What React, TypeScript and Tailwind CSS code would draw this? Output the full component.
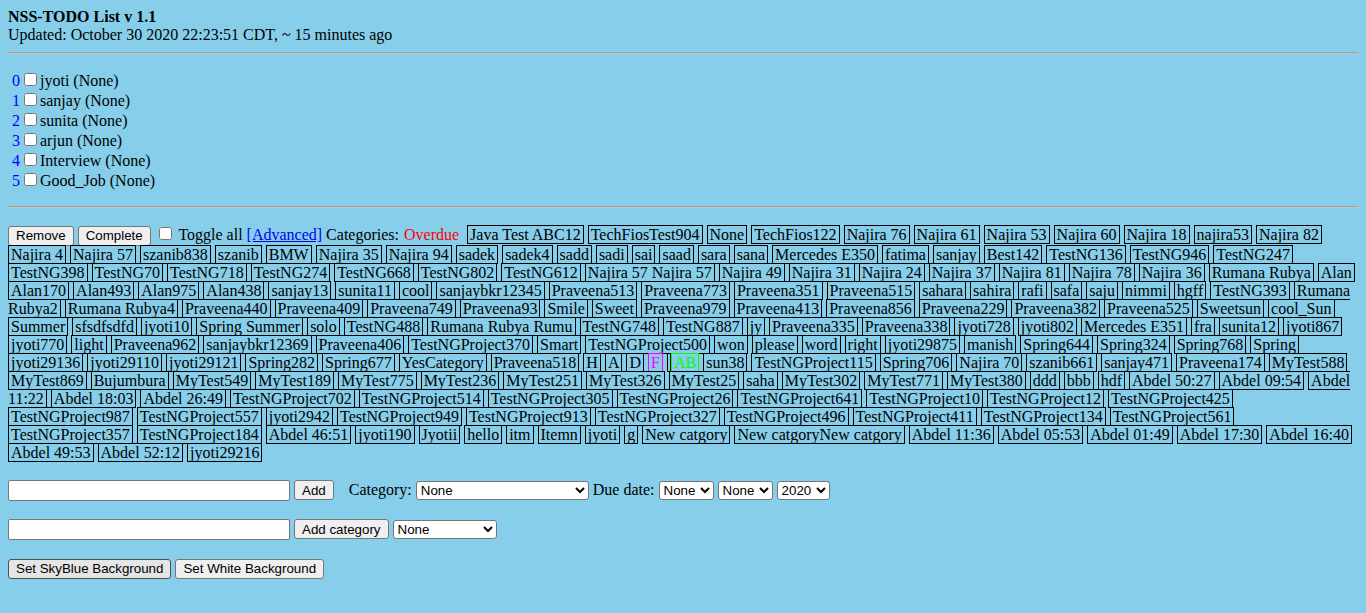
import React, { Fragment } from "react";

type Tag = { t: string; kind?: "f" | "ab" | "empty" };

const raw: string[] = [
  "Java Test ABC12","TechFiosTest904","None","TechFios122","Najira 76","Najira 61","Najira 53","Najira 60","Najira 18","najira53","Najira 82",
  "Najira 4","Najira 57","szanib838","szanib","BMW","Najira 35","Najira 94","sadek","sadek4","sadd","sadi","sai","saad","sara","sana","Mercedes E350","fatima","sanjay","Best142","TestNG136","TestNG946","TestNG247",
  "TestNG398","TestNG70","TestNG718","TestNG274","TestNG668","TestNG802","TestNG612","Najira 57 Najira 57","Najira 49","Najira 31","Najira 24","Najira 37","Najira 81","Najira 78","Najira 36","Rumana Rubya","Alan",
  "Alan170","Alan493","Alan975","Alan438","sanjay13","sunita11","cool","sanjaybkr12345","Praveena513","Praveena773","Praveena351","Praveena515","sahara","sahira","rafi","safa","saju","nimmi","hgff","TestNG393","Rumana Rubya2",
  "Rumana Rubya4","Praveena440","Praveena409","Praveena749","Praveena93","Smile","Sweet","Praveena979","Praveena413","Praveena856","Praveena229","Praveena382","Praveena525","Sweetsun","cool_Sun",
  "Summer","sfsdfsdfd","jyoti10","Spring Summer","solo","TestNG488","Rumana Rubya Rumu","TestNG748","TestNG887","jy","Praveena335","Praveena338","jyoti728","jyoti802","Mercedes E351","fra","sunita12","jyoti867",
  "jyoti770","light","Praveena962","sanjaybkr12369","Praveena406","TestNGProject370","Smart","TestNGProject500","won","please","word","right","jyoti29875","manish","Spring644","Spring324","Spring768","Spring",
  "jyoti29136","jyoti29110","jyoti29121","Spring282","Spring677","YesCategory","Praveena518","H","A","D","@F","@E","@AB","sun38","TestNGProject115","Spring706","Najira 70","szanib661","sanjay471","Praveena174","MyTest588",
  "MyTest869","Bujumbura","MyTest549","MyTest189","MyTest775","MyTest236","MyTest251","MyTest326","MyTest25","saha","MyTest302","MyTest771","MyTest380","ddd","bbb","hdf","Abdel 50:27","Abdel 09:54","Abdel 11:22",
  "Abdel 18:03","Abdel 26:49","TestNGProject702","TestNGProject514","TestNGProject305","TestNGProject26","TestNGProject641","TestNGProject10","TestNGProject12","TestNGProject425",
  "TestNGProject987","TestNGProject557","jyoti2942","TestNGProject949","TestNGProject913","TestNGProject327","TestNGProject496","TestNGProject411","TestNGProject134","TestNGProject561",
  "TestNGProject357","TestNGProject184","Abdel 46:51","jyoti190","Jyotii","hello","itm","Itemn","jyoti","g","New catgory","New catgoryNew catgory","Abdel 11:36","Abdel 05:53","Abdel 01:49","Abdel 17:30","Abdel 16:40",
  "Abdel 49:53","Abdel 52:12","jyoti29216",
];

const tags: Tag[] = raw.map((s) =>
  s === "@F" ? { t: "F", kind: "f" } : s === "@AB" ? { t: "AB", kind: "ab" } : s === "@E" ? { t: "", kind: "empty" } : { t: s }
);

const items = ["jyoti", "sanjay", "sunita", "arjun", "Interview", "Good_Job"];

const btn =
  "inline-block h-[20px] px-[7px] border border-[#767676] rounded-[3px] bg-[#efefef] text-black text-[13.333px] leading-[normal] font-['Liberation_Sans',Arial,sans-serif] align-baseline";
const btnHover =
  "inline-block h-[20px] px-[7px] border border-[#4f4f4f] rounded-[3px] bg-[#e5e5e5] text-black text-[13.333px] leading-[normal] font-['Liberation_Sans',Arial,sans-serif] align-baseline";
const sel =
  "h-[19px] border border-[#767676] rounded-[3px] bg-white text-black text-[13.333px] leading-[normal] font-['Liberation_Sans',Arial,sans-serif]";
const txt =
  "inline-block h-[21px] w-[282px] border border-[#767676] rounded-[2px] bg-white px-[2px] text-[13.333px] font-['Liberation_Sans',Arial,sans-serif]";
const cb = "m-[3px_3px_3px_4px] w-[13px] h-[13px] align-baseline";

function TagSpan({ tag }: { tag: Tag }) {
  if (tag.kind === "f")
    return <span className="border border-[#ff00ff] px-[2px] text-[#ff00ff]">{tag.t}</span>;
  if (tag.kind === "ab")
    return <span className="border border-[#00ff00] px-[2px] text-[#00ff00]">{tag.t}</span>;
  if (tag.kind === "empty") return <span className="border border-black pl-[2px]"></span>;
  return <span className="border border-black px-[2px]">{tag.t}</span>;
}

export default function App() {
  return (
    <div className="min-h-screen bg-[#87ceeb] p-2 text-black text-[16px] leading-[normal] font-['Liberation_Serif','Times_New_Roman',serif]">
      <div>
        <b className="font-bold">NSS-TODO List v 1.1</b>
        <br />
        Updated: October 30 2020 22:23:51 CDT, ~ 15 minutes ago
      </div>
      <hr className="mt-2 mb-4 h-[2px] border-0 border-t border-b border-t-[#a0a0a0] border-b-[#c4c4c4]" />
      <div className="mb-4">
        {items.map((it, i) => (
          <Fragment key={i}>
            {"\u00a0"}
            <span className="text-[#0000ff]">{i}</span>
            <input type="checkbox" className={cb} />
            {it} (None)
            <br />
          </Fragment>
        ))}
      </div>
      <hr className="mb-4 h-[2px] border-0 border-t border-b border-t-[#a0a0a0] border-b-[#c4c4c4]" />
      <p className="my-4">
        <button className={btn}>Remove</button> <button className={btn}>Complete</button>{" "}
        <input type="checkbox" className={cb} /> Toggle all{" "}
        <a className="text-[#0000ee] underline">[Advanced]</a> Categories:{" "}
        <span className="border border-transparent pr-[3px] text-[#ff0000]">Overdue</span>{" "}
        {tags.map((tg, i) => (
          <Fragment key={i}>
            <TagSpan tag={tg} />{" "}
          </Fragment>
        ))}
      </p>
      <p className="mt-[18px] mb-4">
        <input type="text" className={txt} /> <button className={btn}>Add</button>{" "}
        <span className="ml-[11px]">Category:</span>{" "}
        <select className={`${sel} w-[173px]`} defaultValue="None">
          <option>None</option>
        </select>{" "}
        Due date:{" "}
        <select className={`${sel} w-[55px]`} defaultValue="None">
          <option>None</option>
        </select>{" "}
        <select className={`${sel} w-[55px]`} defaultValue="None">
          <option>None</option>
        </select>{" "}
        <select className={`${sel} w-[53px]`} defaultValue="2020">
          <option>2020</option>
        </select>
      </p>
      <p className="mt-[18px] mb-4">
        <input type="text" className={txt} /> <button className={btn}>Add category</button>{" "}
        <select className={`${sel} w-[104px]`} defaultValue="None">
          <option>None</option>
        </select>
      </p>
      <p className="mt-[19px]">
        <button className={btnHover}>Set SkyBlue Background</button>{" "}
        <button className={btn}>Set White Background</button>
      </p>
    </div>
  );
}
